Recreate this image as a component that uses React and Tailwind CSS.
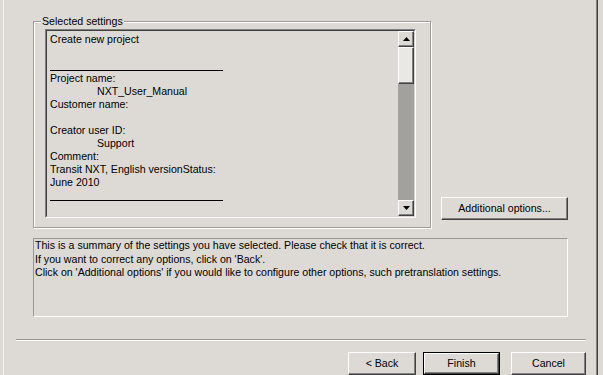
import React from 'react';

// Win classic raised / sunken bevels
const raised = 'border border-t-white border-l-white border-b-[#404040] border-r-[#404040] shadow-[inset_-1px_-1px_0_#808080]';

const lines = [
  { t: 'Create new project' },
  { t: '' },
  { sep: true },
  { t: 'Project name:' },
  { t: 'NXT_User_Manual', indent: true },
  { t: 'Customer name:' },
  { t: '' },
  { t: 'Creator user ID:' },
  { t: 'Support', indent: true },
  { t: 'Comment:' },
  { t: 'Transit NXT, English versionStatus:' },
  { t: 'June 2010' },
  { sep: true },
];

const Arrow = ({ down }) => (
  <svg width="7" height="4" viewBox="0 0 7 4">
    {down ? <polygon points="0,0 7,0 3.5,4" fill="#000" /> : <polygon points="0,4 7,4 3.5,0" fill="#000" />}
  </svg>
);

const Button = ({ children, className = '', isDefault }) => (
  <div className={`h-[23px] flex items-center justify-center ${isDefault ? 'border border-black' : ''} ${className}`}>
    <div className={`w-full h-full flex items-center justify-center ${raised}`}>{children}</div>
  </div>
);

export default function App() {
  return (
    <div
      className="w-[603px] h-[375px] overflow-hidden flex bg-[#dddad5] text-black text-[10.6px] leading-[13px]"
      style={{ fontFamily: '"Liberation Sans", Arial, sans-serif' }}
    >
      <div className="w-[3px] shrink-0" />
      <div className="w-px shrink-0 bg-[#f4f3f0]" />

      <div className="w-[592px] shrink-0 flex flex-col pt-[21px]">
        {/* top row: group box + additional options */}
        <div className="flex items-end ml-[29px]">
          <div className="relative w-[398px] h-[207px] border border-[#a09d98] shadow-[inset_1px_1px_0_#fff,1px_1px_0_#fff] pt-[7px] pl-[11px]">
            <span className="absolute -top-[7px] left-[7px] px-[1px] bg-[#dddad5]">Selected settings</span>

            {/* list box */}
            <div className="w-[371px] h-[189px] border border-t-[#808080] border-l-[#808080] border-b-white border-r-white">
              <div className="w-full h-full flex border border-t-[#404040] border-l-[#404040] border-b-[#d6d3ce] border-r-[#d6d3ce]">
                <div className="flex-1 pl-[3px] pt-[2px] overflow-hidden">
                  {lines.map((l, i) =>
                    l.sep ? (
                      <div key={i} className="h-[13px] flex items-end pb-[1px]">
                        <div className="w-[173px] h-px bg-black" />
                      </div>
                    ) : (
                      <div key={i} className={`h-[13px] whitespace-nowrap ${l.indent ? 'pl-[47px]' : ''}`}>
                        {l.t}
                      </div>
                    )
                  )}
                </div>

                {/* scrollbar */}
                <div className="w-[16px] shrink-0 flex flex-col">
                  <div className={`h-[16px] shrink-0 flex items-center justify-center bg-[#dddad5] ${raised}`}>
                    <Arrow />
                  </div>
                  <div className={`h-[37px] shrink-0 bg-[#eae8e4] ${raised}`} />
                  <div className="flex-1 bg-[#a3a19d]" />
                  <div className={`h-[16px] shrink-0 flex items-center justify-center bg-[#dddad5] ${raised}`}>
                    <Arrow down />
                  </div>
                </div>
              </div>
            </div>
          </div>

          <Button className="w-[127px] h-[22px] ml-[10px] mb-[8px]">Additional options...</Button>
        </div>

        {/* summary */}
        <div className="ml-[29px] mt-[10px] w-[535px] h-[91px] border border-t-[#9a9792] border-l-[#9a9792] border-b-white border-r-white pl-[1px] pt-0">
          <div className="leading-[13.5px]">This is a summary of the settings you have selected. Please check that it is correct.</div>
          <div className="leading-[13.5px]">If you want to correct any options, click on 'Back'.</div>
          <div className="leading-[13.5px]">Click on 'Additional options' if you would like to configure other options, such pretranslation settings.</div>
        </div>

        {/* separator */}
        <div className="ml-[12px] mt-[22px] w-[570px] h-px bg-[#9a9792] shadow-[0_1px_0_#fff]" />

        {/* buttons */}
        <div className="mt-[12px] flex justify-end pr-[10px]">
          <Button className="w-[68px]">&lt; Back</Button>
          <Button className="w-[77px] ml-[7px]" isDefault>Finish</Button>
          <Button className="w-[75px] ml-[11px]">Cancel</Button>
        </div>
      </div>

      <div className="w-px shrink-0 bg-[#808080]" />
      <div className="w-px shrink-0 bg-[#404040]" />
      <div className="flex-1" />
    </div>
  );
}
